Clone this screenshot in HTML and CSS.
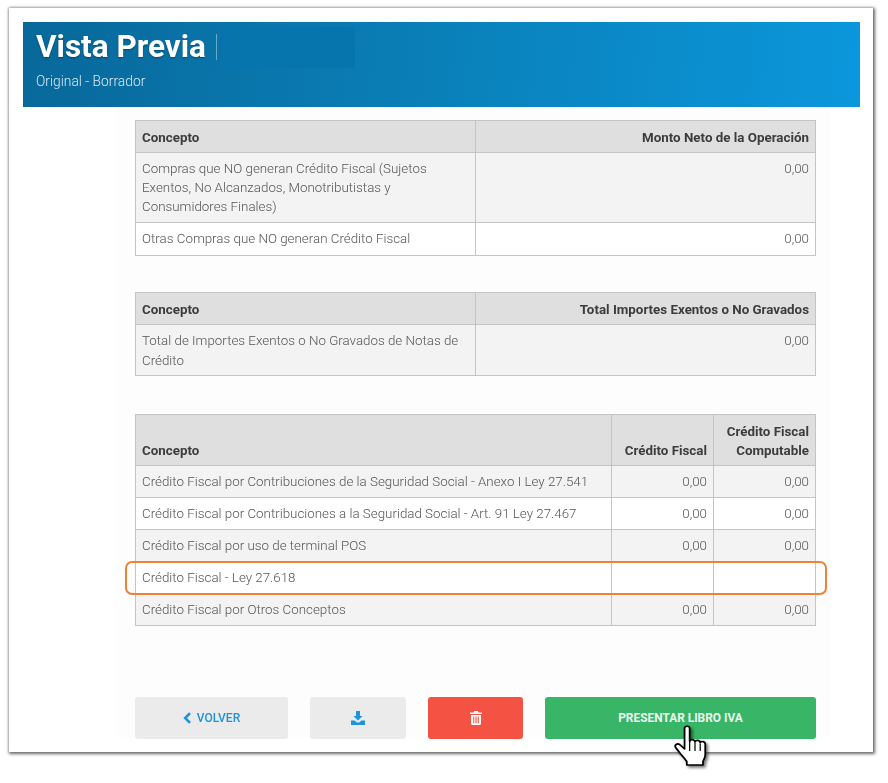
FILE: index.html
```html
<!DOCTYPE html>
<html lang="es">
<head>
<meta charset="utf-8">
<title>Vista Previa</title>
<link rel="stylesheet" href="styles.css">
</head>
<body>
<main class="frame">
  <header class="banner">
    <div class="banner-title">
      <h1>Vista Previa</h1>
      <span class="sep"></span>
      <span class="redacted"></span>
    </div>
    <p class="banner-sub">Original - Borrador</p>
  </header>
  <section class="content">
    <table class="grid t1">
      <thead><tr><th class="l">Concepto</th><th class="r">Monto Neto de la Operación</th></tr></thead>
      <tbody>
        <tr class="odd tall"><td>Compras que NO generan Crédito Fiscal (Sujetos Exentos, No Alcanzados, Monotributistas y Consumidores Finales)</td><td class="r">0,00</td></tr>
        <tr class="after-tall"><td>Otras Compras que NO generan Crédito Fiscal</td><td class="r">0,00</td></tr>
      </tbody>
    </table>
    <table class="grid t1 t2">
      <thead><tr><th class="l">Concepto</th><th class="r">Total Importes Exentos o No Gravados</th></tr></thead>
      <tbody>
        <tr class="odd"><td>Total de Importes Exentos o No Gravados de Notas de Crédito</td><td class="r">0,00</td></tr>
      </tbody>
    </table>
    <table class="grid t3">
      <thead><tr><th class="l">Concepto</th><th class="r">Crédito Fiscal</th><th class="r">Crédito Fiscal Computable</th></tr></thead>
      <tbody>
        <tr class="odd"><td>Crédito Fiscal por Contribuciones de la Seguridad Social - Anexo I Ley 27.541</td><td class="r">0,00</td><td class="r">0,00</td></tr>
        <tr><td>Crédito Fiscal por Contribuciones a la Seguridad Social - Art. 91 Ley 27.467</td><td class="r">0,00</td><td class="r">0,00</td></tr>
        <tr class="odd"><td>Crédito Fiscal por uso de terminal POS</td><td class="r">0,00</td><td class="r">0,00</td></tr>
        <tr><td>Crédito Fiscal - Ley 27.618</td><td class="r"></td><td class="r"></td></tr>
        <tr class="odd"><td>Crédito Fiscal por Otros Conceptos</td><td class="r">0,00</td><td class="r">0,00</td></tr>
      </tbody>
    </table>
    <div class="actions">
      <button class="btn btn-back" type="button">
        <svg class="ico" width="9" height="12" viewBox="0 0 9 12"><path d="M7 1.200 2.200 6 7 10.800" fill="none" stroke="currentColor" stroke-width="2.600"/></svg>
        VOLVER
      </button>
      <button class="btn btn-dl" type="button" aria-label="Descargar">
        <svg width="14" height="14" viewBox="0 0 14 14"><path fill="currentColor" d="M5 0h4v5h2.600L7 9.600 2.400 5H5zM0 9.400h3.600L5.800 11.400h2.400l2.200-2H14V14H0z"/></svg>
      </button>
      <button class="btn btn-del" type="button" aria-label="Eliminar">
        <svg width="12" height="14" viewBox="0 0 12 14"><path fill="currentColor" fill-rule="evenodd" d="M4.200 0h3.600l.8 1.600H12v1.500H0V1.600h3.400zM1 4h10v8.600c0 .8-.6 1.400-1.300 1.400H2.300C1.600 14 1 13.400 1 12.600zm2.200 1.600v6.600h1.100V5.600zm2.300 0v6.600h1.100V5.600zm2.200 0v6.600h1.100V5.600z"/></svg>
      </button>
      <button class="btn btn-go" type="button">PRESENTAR LIBRO IVA</button>
    </div>
  </section>
  <div class="highlight"></div>
  <svg class="cursor" width="40" height="46" viewBox="0 0 36 46" preserveAspectRatio="none">
    <path fill="#fff" stroke="#000" stroke-width="1.600" stroke-linejoin="round" d="M9.500 3.500c0-3 4.600-3 4.600 0v13c.6-2.600 4.600-2.400 4.800.4.600-2.300 4.400-2 4.700.7.800-1.800 4.400-1.300 4.500 1.300v11.100c0 2.500-1.200 4-2 6.500v3.500H11.500v-3.500c-1.500-2.500-3.500-5-5.500-7.500L1.500 22.500c-1.500-2.500 1.500-4.500 3.500-3l4.500 4.500z"/>
    <path fill="none" stroke="#000" stroke-width="1.100" d="M14.100 17v9M18.900 17.500v8.500M23.600 18.500v7.500"/>
  </svg>
</main>
</body>
</html>
```
FILE: styles.css
```css
* { box-sizing: border-box; }
html, body { margin: 0; padding: 0; background: #fff; }
body { width: 888px; height: 783px; overflow: hidden; font-family: Roboto, "Liberation Sans", sans-serif; }

.frame {
  position: relative;
  width: 864px;
  height: 744px;
  margin: 8px 0 0 9px;
  padding: 14px 13px 0 14px;
  background: #fff;
  box-shadow: 1px 1px 3px 1px rgba(50,50,50,.7), 0 0 3px rgba(0,0,0,.2);
  filter: blur(.35px);
}

.banner {
  height: 85px;
  padding: 7px 13px 0;
  color: #fff;
  background: linear-gradient(96deg, #08689a 0%, #0a80b9 50%, #0b97dc 100%);
}
.banner-title { display: flex; align-items: center; height: 36px; }
.banner-title h1 {
  margin: 0;
  font-size: 31.500px;
  line-height: 36px;
  font-weight: 700;
  text-shadow: 0 1px 2px rgba(0,0,0,.35);
}
.sep { width: 1px; height: 26px; margin-left: 10px; background: rgba(255,255,255,.4); }
.redacted { width: 130px; height: 41px; margin-left: 8px; background: #0674ad; }
.banner-sub { margin: 6px 0 0; font-size: 13.800px; line-height: 20px; font-weight: 300; color: rgba(255,255,255,.85); }

.content {
  width: 716px;
  height: 630px;
  margin-left: 92px;
  padding: 13px 15px 0 20px;
  background: #fdfdfd;
}

.grid {
  width: 681px;
  table-layout: fixed;
  border-collapse: collapse;
  font-size: 13.350px;
  font-weight: 300;
  line-height: 19.300px;
  color: #555;
  background: #fff;
  margin-bottom: 36px;
}
.grid.t2 { margin-bottom: 38px; }
.grid th, .grid td { border: 1px solid #c4c4c4; padding: 5.500px 6px; vertical-align: top; height: 33px; }
.grid th {
  background: #dfdfdf;
  color: #3c3c3c;
  font-size: 13.350px;
  font-weight: 700;
  vertical-align: bottom;
  padding: 6px 6px 5px;
  height: 32px;
}
.grid .l { text-align: left; }
.grid .r { text-align: right; }
.odd td { background: #f3f3f3; }
.t1 th:first-child { width: 340px; }
.t2 td { padding-top: 6.500px; }
.after-tall td { padding-top: 6.500px; }
.t3 th:nth-child(2) { width: 102px; }
.t3 th:nth-child(3) { width: 102px; }
.grid.t3 th { height: 51px; padding-bottom: 5px; }
.grid.t3 td { height: 32px; padding-top: 6px; padding-bottom: 5px; }

.actions { display: flex; gap: 22px; margin-top: 71px; height: 42px; }
.btn {
  flex: none;
  height: 42px;
  border: 0;
  border-radius: 3px;
  font-family: inherit;
  font-size: 12px;
  font-weight: 500;
  display: flex;
  align-items: center;
  justify-content: center;
  gap: 5px;
  padding: 0;
}
.btn-back { width: 153px; background: #ebebeb; color: #1f93dc; }
.btn-dl { width: 96px; background: #ebebeb; color: #1f93dc; }
.btn-del { width: 95px; background: #f45344; color: #fff; }
.btn-go { width: 271px; background: #38b566; color: #e9f8ef; font-weight: 700; font-size: 11.900px; }

.highlight {
  position: absolute;
  left: 116px;
  top: 553px;
  width: 702px;
  height: 34px;
  border: 2px solid #ee8239;
  border-radius: 7px;
}
.cursor {
  position: absolute;
  left: 665px;
  top: 717px;
  filter: drop-shadow(2px 2px 1.500px rgba(0,0,0,.55));
}
```
